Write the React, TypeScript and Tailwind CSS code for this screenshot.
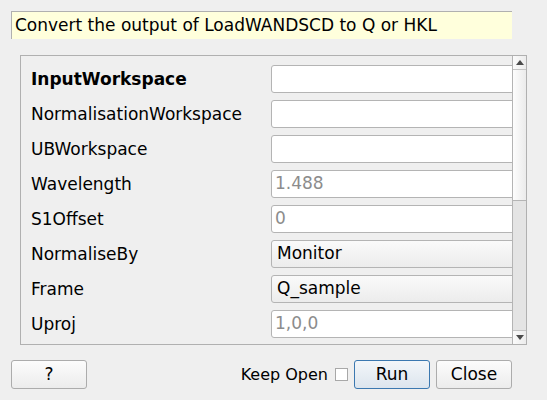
const font = { fontFamily: '"DejaVu Sans", "Liberation Sans", sans-serif' };

type Row = {
  label: string;
  bold?: boolean;
  kind: "text" | "combo";
  value?: string;
  placeholder?: boolean;
};

const rows: Row[] = [
  { label: "InputWorkspace", bold: true, kind: "text" },
  { label: "NormalisationWorkspace", kind: "text" },
  { label: "UBWorkspace", kind: "text" },
  { label: "Wavelength", kind: "text", value: "1.488", placeholder: true },
  { label: "S1Offset", kind: "text", value: "0", placeholder: true },
  { label: "NormaliseBy", kind: "combo", value: "Monitor" },
  { label: "Frame", kind: "combo", value: "Q_sample" },
  { label: "Uproj", kind: "text", value: "1,0,0", placeholder: true },
];

function Field({ row }: { row: Row }) {
  if (row.kind === "combo") {
    return (
      <div className="flex h-[28px] w-[260px] shrink-0 items-center rounded-[3px] border border-[#b4b4b4] bg-gradient-to-b from-[#fafafa] to-[#ececec] pl-[5px] text-black">
        {row.value}
      </div>
    );
  }
  return (
    <div
      className={
        "flex h-[28px] w-[260px] shrink-0 items-center rounded-[3px] border border-[#b4b4b4] bg-white pl-[3px] " +
        (row.placeholder ? "text-[#8c8c8c]" : "text-black")
      }
    >
      {row.value ?? ""}
    </div>
  );
}

function ScrollBar() {
  return (
    <div className="flex w-[14px] shrink-0 flex-col border-l border-[#b4b4b4] bg-[#e4e4e4]">
      <div className="flex h-[14px] shrink-0 items-center justify-center border-b border-[#c4c4c4] bg-gradient-to-r from-[#fbfbfb] to-[#ececec]">
        <svg width="8" height="5" viewBox="0 0 8 5">
          <polygon points="0,5 8,5 4,0" fill="#4a4a4a" />
        </svg>
      </div>
      <div className="h-[131px] shrink-0 border-b border-[#b4b4b4] bg-gradient-to-r from-[#fdfdfd] to-[#ebebeb]" />
      <div className="flex-1" />
      <div className="flex h-[14px] shrink-0 items-center justify-center border-t border-[#c4c4c4] bg-gradient-to-r from-[#fbfbfb] to-[#ececec]">
        <svg width="8" height="5" viewBox="0 0 8 5">
          <polygon points="0,0 8,0 4,5" fill="#4a4a4a" />
        </svg>
      </div>
    </div>
  );
}

function Button({ children, primary }: { children: React.ReactNode; primary?: boolean }) {
  return (
    <button
      className={
        "flex h-[29px] w-[76px] items-center justify-center rounded-[3px] border text-black " +
        (primary
          ? "border-[#3b78b0] bg-gradient-to-b from-[#f3f6f9] to-[#dce5ee]"
          : "border-[#acacac] bg-gradient-to-b from-[#fcfcfc] to-[#ececec]")
      }
    >
      {children}
    </button>
  );
}

export default function App() {
  return (
    <div className="flex h-[400px] w-[547px] flex-col bg-[#efefef] text-[17px] text-black" style={font}>
      <div className="ml-[11px] mt-[11px] flex h-[28px] w-[501px] items-center border-l border-t border-[#b0b0b0] bg-[#ffffdc] pl-[3px]">
        Convert the output of LoadWANDSCD to Q or HKL
      </div>

      <div className="ml-[20px] mt-[16px] flex h-[290px] w-[507px] border border-[#b0b0b0]">
        <div className="flex flex-1 flex-col gap-[7px] overflow-hidden pl-[10px] pt-[9px]">
          {rows.map((r) => (
            <div key={r.label} className="flex items-center">
              <div className={"w-[240px] shrink-0 pt-[1px] " + (r.bold ? "font-bold" : "")}>{r.label}</div>
              <Field row={r} />
            </div>
          ))}
        </div>
        <ScrollBar />
      </div>

      <div className="mt-[15px] flex items-center pl-[11px] pr-[35px]">
        <Button>?</Button>
        <div className="flex-1" />
        <span className="mr-[7px] text-[16px]">Keep Open</span>
        <div className="mr-[6px] h-[13px] w-[13px] border border-[#a8a8a8] bg-white" />
        <Button primary>Run</Button>
        <div className="w-[6px]" />
        <Button>Close</Button>
      </div>
    </div>
  );
}
